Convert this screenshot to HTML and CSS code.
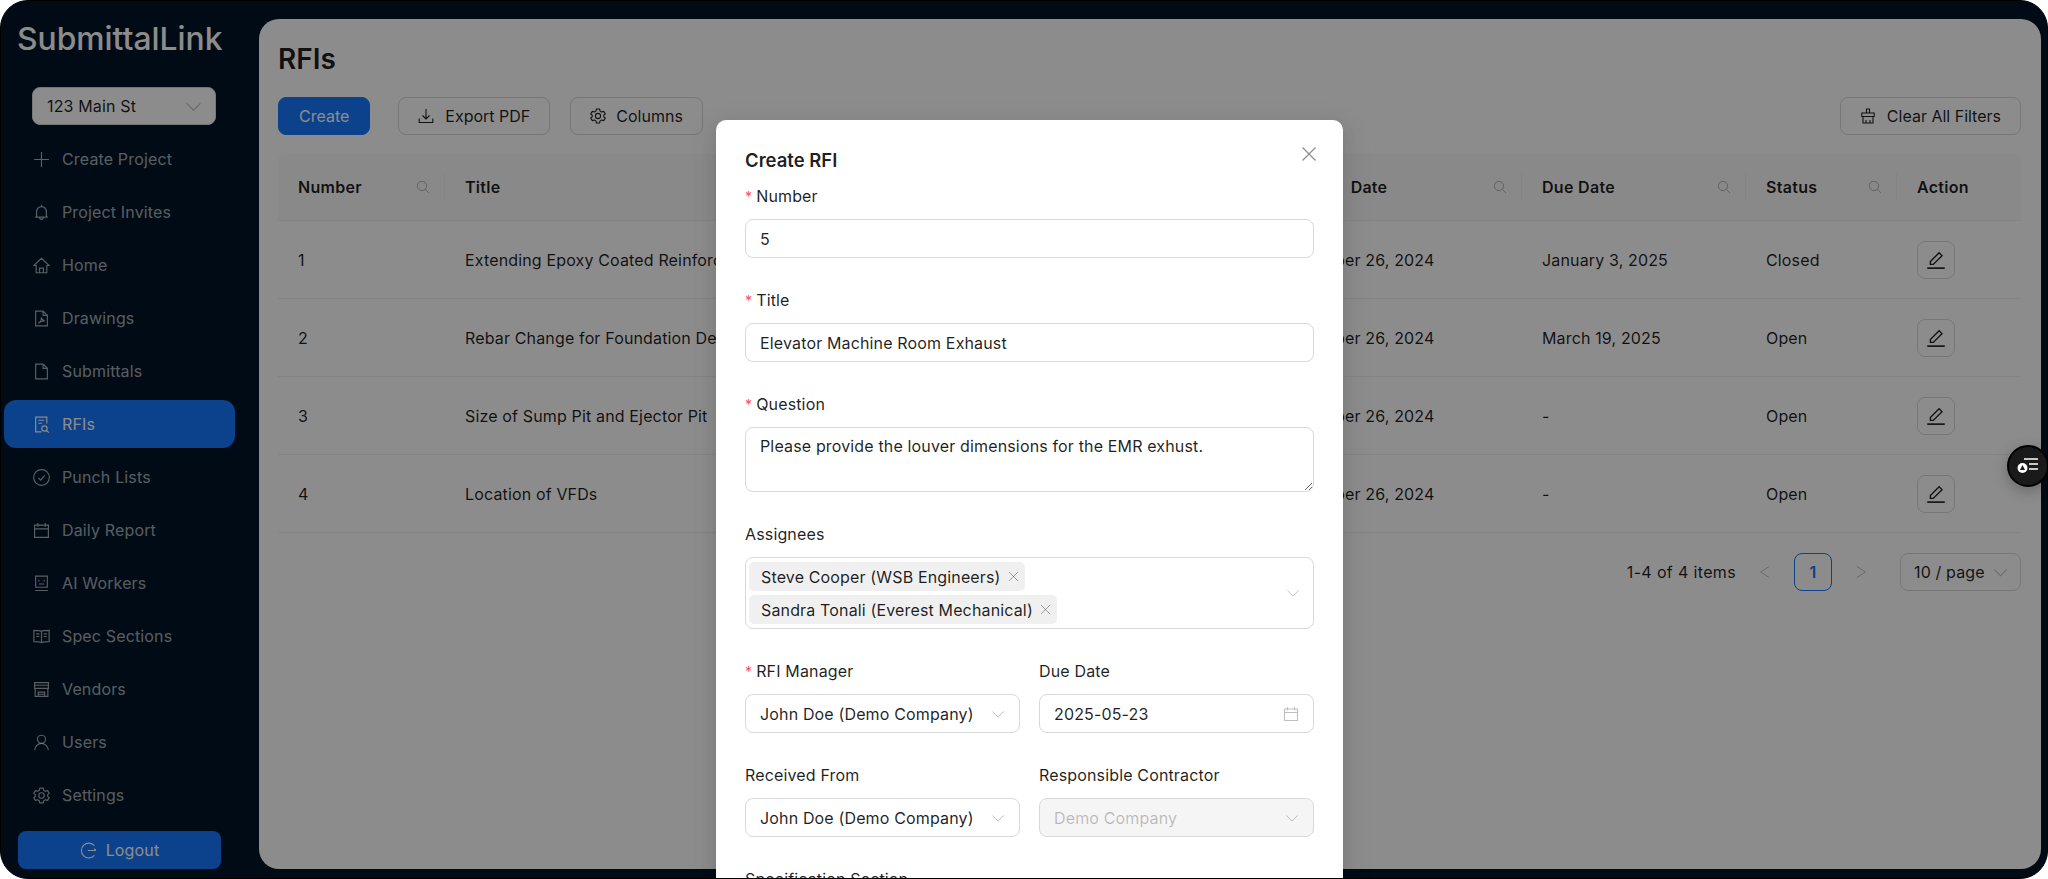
FILE: index.html
```html
<!DOCTYPE html>
<html lang="en">
<head>
  <meta charset="UTF-8" />
  <title>SubmittalLink – RFIs</title>
  <link rel="stylesheet" href="styles.css">
</head>
<body>
  <!-- icon sprite -->
  <svg class="sprite" xmlns="http://www.w3.org/2000/svg">
    <symbol id="i-plus" viewBox="0 0 16 16"><path d="M8 1v14M1 8h14"/></symbol>
    <symbol id="i-bell" viewBox="0 0 16 16"><path d="M8 .8v1.5M3.4 12.3V7a4.6 4.6 0 0 1 9.2 0v5.3M2 12.3h12M6.2 12.5c0 2.6 3.6 2.6 3.6 0"/></symbol>
    <symbol id="i-home" viewBox="0 0 16 16"><path d="M.8 8 8 1.2 15.2 8H13v6.8H3V8zM6.2 14.8v-4.4h3.6v4.4"/></symbol>
    <symbol id="i-pdf" viewBox="0 0 16 16"><path d="M2.5 1h7L13.5 5v10h-11zM9.5 1v4h4M5 12.5c1.6-1 3.2-3.6 2.8-5.6.4 1.8 1.7 3.2 3.2 3.4-1.8 0-4.4.8-6 2.2z"/></symbol>
    <symbol id="i-file" viewBox="0 0 16 16"><path d="M2.5 1h7L13.5 5v10h-11zM9.5 1v4h4"/></symbol>
    <symbol id="i-file-search" viewBox="0 0 16 16"><path d="M13 7V1H2.5v14H8M5 4h5.5M5 6.8h3.5M12.6 13.6l2.4 2"/><circle cx="10.8" cy="11.8" r="2.5"/></symbol>
    <symbol id="i-check" viewBox="0 0 16 16"><circle cx="8" cy="8" r="7.4"/><path d="M5 8.3l2.2 2.2L11 6"/></symbol>
    <symbol id="i-calendar" viewBox="0 0 16 16"><path d="M1.5 3h13v11.5h-13zM1.5 6.5h13M4.5 1v3.5M11.5 1v3.5"/></symbol>
    <symbol id="i-ai" viewBox="0 0 16 16"><path d="M2.5 1h11v10.5h-11zM5.5 4.5V6M10.5 4.5V6M5.5 8.5h5M2 14.6h12"/></symbol>
    <symbol id="i-book" viewBox="0 0 16 16"><path d="M8 3v10.8M8 3C6.5 2.2 3 2.2.8 2.2v10.6c2.2 0 5.7 0 7.2 1 1.5-1 5-1 7.200-1V2.2C13 2.2 9.500 2.2 8 3zM3 5.500h3M3 8h3M10 5.500h3M10 8h3"/></symbol>
    <symbol id="i-shop" viewBox="0 0 16 16"><path d="M1.5 1.5h13V7h-13zM1.500 4h13M2 7v7.500h12V7M5 14.500V10.500h6v4M5 12.500h6"/></symbol>
    <symbol id="i-user" viewBox="0 0 16 16"><circle cx="8" cy="5" r="3.8"/><path d="M1.5 15.2c.4-3.6 3.2-6.400 6.500-6.400s6.100 2.800 6.500 6.400"/></symbol>
    <symbol id="i-gear" viewBox="0 0 16 16"><path stroke-linejoin="round" d="M6.4 1h3.2l.5 2.1 1.5.9 2.1-.6 1.6 2.6-1.5 1.15v1.7L15.3 10l-1.6 2.6-2.1-.6-1.5.9-.5 2.1H6.4l-.5-2.1-1.5-.9-2.1.6L.7 10l1.5-1.15v-1.7L.7 6l1.6-2.6 2.1.6 1.5-.9z"/><circle cx="8" cy="8" r="2.6"/></symbol>
    <symbol id="i-logout" viewBox="0 0 16 16"><path d="M13.6 3.4a7 7 0 1 0 0 9.2M7.400 8H15M13.300 6.300 15 8"/></symbol>
    <symbol id="i-download" viewBox="0 0 16 16"><path d="M8 1v9.500M4.500 7.500 8 11l3.500-3.500M1.200 10.500v4h13.600v-4"/></symbol>
    <symbol id="i-clear" viewBox="0 0 16 16"><path d="M6.5 1h3v4h-3zM1.800 5h12.400v3.500H1.800zM3 8.500V15h10V8.500M6 15v-3M10 15v-3"/></symbol>
    <symbol id="i-search" viewBox="0 0 16 16"><circle cx="6.8" cy="6.8" r="5.3"/><path d="M10.800 10.800 15 15"/></symbol>
    <symbol id="i-edit" viewBox="0 0 16 16"><path d="M3.5 11.500V9.200l7-7 2.300 2.300-7 7z"/><path stroke-width="1.3" d="M1 14.500h14"/></symbol>
    <symbol id="i-down" viewBox="0 0 16 16"><path d="M1.500 5 8 11.500 14.500 5"/></symbol>
    <symbol id="i-prev" viewBox="0 0 16 16"><path d="M13 1.500 3 8l10 6.500"/></symbol>
    <symbol id="i-next" viewBox="0 0 16 16"><path d="M3 1.500 13 8 3 14.500"/></symbol>
    <symbol id="i-close" viewBox="0 0 16 16"><path d="M1.500 1.500l13 13M14.500 1.500l-13 13"/></symbol>
  </svg>

  <div class="window">
    <aside class="sidebar">
      <div class="logo">SubmittalLink</div>
      <div class="project-select">
        <span>123 Main St</span>
        <svg class="icon"><use href="#i-down"/></svg>
      </div>
      <nav class="menu">
        <a class="menu-item"><svg class="icon"><use href="#i-plus"/></svg>Create Project</a>
        <a class="menu-item"><svg class="icon"><use href="#i-bell"/></svg>Project Invites</a>
        <a class="menu-item"><svg class="icon"><use href="#i-home"/></svg>Home</a>
        <a class="menu-item"><svg class="icon"><use href="#i-pdf"/></svg>Drawings</a>
        <a class="menu-item"><svg class="icon"><use href="#i-file"/></svg>Submittals</a>
        <a class="menu-item active"><svg class="icon"><use href="#i-file-search"/></svg>RFIs</a>
        <a class="menu-item"><svg class="icon"><use href="#i-check"/></svg>Punch Lists</a>
        <a class="menu-item"><svg class="icon"><use href="#i-calendar"/></svg>Daily Report</a>
        <a class="menu-item"><svg class="icon"><use href="#i-ai"/></svg>AI Workers</a>
        <a class="menu-item"><svg class="icon"><use href="#i-book"/></svg>Spec Sections</a>
        <a class="menu-item"><svg class="icon"><use href="#i-shop"/></svg>Vendors</a>
        <a class="menu-item"><svg class="icon"><use href="#i-user"/></svg>Users</a>
        <a class="menu-item"><svg class="icon"><use href="#i-gear"/></svg>Settings</a>
      </nav>
      <button class="logout"><svg class="icon"><use href="#i-logout"/></svg>Logout</button>
    </aside>

    <main class="content">
      <h1 class="page-title">RFIs</h1>
      <div class="toolbar">
        <button class="btn btn-primary">Create</button>
        <button class="btn export-btn"><svg class="icon"><use href="#i-download"/></svg>Export PDF</button>
        <button class="btn columns-btn"><svg class="icon"><use href="#i-gear"/></svg>Columns</button>
        <button class="btn clear-btn"><svg class="icon"><use href="#i-clear"/></svg>Clear All Filters</button>
      </div>

      <table class="rfi-table">
        <colgroup>
          <col class="col-number"><col class="col-title"><col class="col-created">
          <col class="col-due"><col class="col-status"><col class="col-action">
        </colgroup>
        <thead>
          <tr>
            <th><div class="th-inner">Number<svg class="icon-sm"><use href="#i-search"/></svg></div></th>
            <th><div class="th-inner">Title<svg class="icon-sm"><use href="#i-search"/></svg></div></th>
            <th class="th-created"><div class="th-inner">Created Date<svg class="icon-sm"><use href="#i-search"/></svg></div></th>
            <th><div class="th-inner">Due Date<svg class="icon-sm"><use href="#i-search"/></svg></div></th>
            <th><div class="th-inner">Status<svg class="icon-sm"><use href="#i-search"/></svg></div></th>
            <th>Action</th>
          </tr>
        </thead>
        <tbody>
          <tr>
            <td>1</td><td>Extending Epoxy Coated Reinforcing Bars</td><td>December 26, 2024</td>
            <td>January 3, 2025</td><td>Closed</td>
            <td><button class="edit-btn"><svg class="icon"><use href="#i-edit"/></svg></button></td>
          </tr>
          <tr>
            <td>2</td><td>Rebar Change for Foundation Design</td><td>December 26, 2024</td>
            <td>March 19, 2025</td><td>Open</td>
            <td><button class="edit-btn"><svg class="icon"><use href="#i-edit"/></svg></button></td>
          </tr>
          <tr>
            <td>3</td><td>Size of Sump Pit and Ejector Pit</td><td>December 26, 2024</td>
            <td>-</td><td>Open</td>
            <td><button class="edit-btn"><svg class="icon"><use href="#i-edit"/></svg></button></td>
          </tr>
          <tr>
            <td>4</td><td>Location of VFDs</td><td>December 26, 2024</td>
            <td>-</td><td>Open</td>
            <td><button class="edit-btn"><svg class="icon"><use href="#i-edit"/></svg></button></td>
          </tr>
        </tbody>
      </table>

      <div class="pagination">
        <span class="page-total">1-4 of 4 items</span>
        <span class="page-arrow"><svg class="icon-sm"><use href="#i-prev"/></svg></span>
        <span class="page-current">1</span>
        <span class="page-arrow"><svg class="icon-sm"><use href="#i-next"/></svg></span>
        <div class="page-size">10 / page<svg class="icon-sm"><use href="#i-down"/></svg></div>
      </div>
    </main>

    <!-- modal layer -->
    <div class="mask">
      <form class="modal">
        <div class="modal-head">
          <h2>Create RFI</h2>
          <svg class="modal-close"><use href="#i-close"/></svg>
        </div>

        <div class="field">
          <label class="req">Number</label>
          <input class="control" type="text" value="5" readonly />
        </div>
        <div class="field">
          <label class="req">Title</label>
          <input class="control" type="text" value="Elevator Machine Room Exhaust" readonly />
        </div>
        <div class="field">
          <label class="req">Question</label>
          <textarea class="control area" readonly>Please provide the louver dimensions for the EMR exhust.</textarea>
        </div>
        <div class="field">
          <label>Assignees</label>
          <div class="control multi">
            <div class="tags">
              <span class="tag">Steve Cooper (WSB Engineers)<svg><use href="#i-close"/></svg></span>
              <span class="tag">Sandra Tonali (Everest Mechanical)<svg><use href="#i-close"/></svg></span>
            </div>
            <svg class="icon-sm chev"><use href="#i-down"/></svg>
          </div>
        </div>
        <div class="field-row">
          <div class="field">
            <label class="req">RFI Manager</label>
            <div class="control select">John Doe (Demo Company)<svg class="icon-sm chev"><use href="#i-down"/></svg></div>
          </div>
          <div class="field">
            <label>Due Date</label>
            <div class="control select">2025-05-23<svg class="icon-sm chev date-icon"><use href="#i-calendar"/></svg></div>
          </div>
        </div>
        <div class="field-row">
          <div class="field">
            <label>Received From</label>
            <div class="control select">John Doe (Demo Company)<svg class="icon-sm chev"><use href="#i-down"/></svg></div>
          </div>
          <div class="field">
            <label>Responsible Contractor</label>
            <div class="control select disabled">Demo Company<svg class="icon-sm chev"><use href="#i-down"/></svg></div>
          </div>
        </div>
        <div class="field">
          <label>Specification Section</label>
          <div class="control select"></div>
        </div>
      </form>
    </div>

    <div class="float-btn">
      <svg viewBox="0 0 24 24" width="24" height="24">
        <path d="M8 5h14M13 10h9M13 15h9" stroke="#fff" stroke-width="1.5" fill="none"/>
        <circle cx="6.5" cy="14" r="5" fill="#fff"/>
        <path d="M6.5 11 9 16H4z" fill="#1a1a1a"/>
      </svg>
    </div>
  </div>
</body>
</html>
```

FILE: styles.css
```css
/* Reset and base */
* { margin:0; padding:0; box-sizing:border-box; }
html, body { height:100%; }
body {
  background:#fff; color:rgba(0,0,0,0.88);
  font-family:Inter, "Noto Sans", sans-serif; font-size:16px; letter-spacing:0.15px;
  overflow:hidden;
}
.sprite { display:none; }
.icon, .icon-sm, .modal-close, .tag svg {
  fill:none; stroke:currentColor; stroke-width:1.1; flex:none;
}
.icon { width:16px; height:16px; }
.icon-sm { width:14px; height:14px; }
button { font:inherit; letter-spacing:inherit; color:inherit; background:none; border:none; }

.window {
  position:relative; display:flex; height:100vh;
  background:#001529; border:1px solid #000; border-radius:28px; overflow:hidden;
}

/* Sidebar */
.sidebar { width:258px; flex:none; display:flex; flex-direction:column; }
.logo {
  height:40px; margin:18px 0 0 16px;
  color:#fff; font-size:31.8px; font-weight:500; line-height:40px; letter-spacing:0;
}
.project-select {
  display:flex; align-items:center; justify-content:space-between;
  width:184px; height:38px; margin:28px 0 0 31px; padding:0 13px 0 14px;
  background:#fff; border:1px solid #d9d9d9; border-radius:8px;
}
.project-select .icon { width:17px; height:17px; color:rgba(0,0,0,0.25); }
.menu { display:flex; flex-direction:column; gap:5px; margin:10px 0 0 3px; }
.menu-item {
  display:flex; align-items:center; gap:12px;
  width:231px; height:48px; padding-left:29px;
  color:rgba(255,255,255,0.65); border-radius:12px;
}
.menu-item .icon { width:17px; height:17px; }
.menu-item.active { background:#1677ff; color:#fff; }
.logout {
  display:flex; align-items:center; justify-content:center; gap:9px;
  width:203px; height:38px; margin:12px 0 0 17px;
  background:#1677ff; color:#fff; border-radius:8px;
}
.logout .icon { width:17px; height:17px; }

/* Main panel */
.content {
  flex:1; margin:18px 6px 9px 0; padding:20px 20px 0 19px;
  background:#fff; border-radius:20px;
}
.page-title { font-size:28px; font-weight:600; line-height:40px; letter-spacing:0; margin-bottom:18px; }
.toolbar { display:flex; gap:20px; margin-bottom:19px; }
.btn {
  display:flex; align-items:center; gap:11px;
  height:38px; padding:0 19px; letter-spacing:0;
  background:#fff; border:1px solid #d9d9d9; border-radius:8px;
}
.btn-primary { padding:0 20px; background:#1677ff; border-color:#1677ff; color:#fff; margin-right:8px; }
.columns-btn { gap:10px; }
.clear-btn { margin-left:auto; }

/* Table */
.rfi-table { width:1743px; table-layout:fixed; border-collapse:separate; border-spacing:0; }
.col-number { width:167px; }
.col-title { width:816px; }
.col-created { width:261px; }
.col-due { width:224px; }
.col-status { width:151px; }
.col-action { width:124px; }
.rfi-table th {
  position:relative; height:67px; padding:0 20px;
  background:#fafafa; border-bottom:1px solid #f0f0f0;
  text-align:left; font-weight:600; letter-spacing:0.3px;
}
.rfi-table th.th-created { letter-spacing:0.15px; word-spacing:3px; }
.rfi-table th:first-child { border-top-left-radius:8px; }
.rfi-table th:last-child { border-top-right-radius:8px; }
.rfi-table th:not(:last-child)::after {
  content:""; position:absolute; right:0; top:19px; height:27px; width:1px; background:#f0f0f0;
}
.th-inner { display:flex; align-items:center; justify-content:space-between; margin-right:-5px; }
.th-inner .icon-sm { color:rgba(0,0,0,0.29); }
.rfi-table td { height:78px; padding:0 20px; border-bottom:1px solid #f0f0f0; white-space:nowrap; }
.edit-btn {
  display:flex; align-items:center; justify-content:center;
  width:38px; height:38px; background:#fff; border:1px solid #d9d9d9; border-radius:8px;
}
.edit-btn .icon { width:20px; height:20px; }

/* Pagination */
.pagination { display:flex; align-items:center; justify-content:flex-end; gap:10px; margin-top:20px; }
.page-total { letter-spacing:0.35px; }
.page-arrow { display:flex; align-items:center; justify-content:center; width:38px; height:38px; color:rgba(0,0,0,0.25); }
.page-current {
  display:flex; align-items:center; justify-content:center;
  width:38px; height:38px; border:1px solid #1677ff; border-radius:8px;
  color:#1677ff; font-weight:600;
}
.page-size {
  display:flex; align-items:center; justify-content:space-between;
  width:121px; height:38px; margin-left:10px; padding:0 12px 0 13px;
  border:1px solid #d9d9d9; border-radius:8px;
}
.page-size .icon-sm { width:15px; height:15px; color:rgba(0,0,0,0.25); }

/* Modal */
.mask {
  position:absolute; inset:0; display:flex; justify-content:center; align-items:flex-start;
  padding:119px 0 0 11px; background:rgba(0,0,0,0.45);
}
.modal {
  flex:none; width:627px; padding:28px 29px 30px;
  background:#fff; border-radius:10px;
  box-shadow:0 6px 16px rgba(0,0,0,0.08), 0 3px 6px -4px rgba(0,0,0,0.12), 0 9px 28px 8px rgba(0,0,0,0.05);
}
.modal-head { position:relative; height:24px; margin-bottom:10px; }
.modal-head h2 { font-size:18.5px; font-weight:600; line-height:24px; letter-spacing:0; }
.modal-close {
  position:absolute; right:-3px; top:-2px; width:16px; height:16px;
  color:rgba(0,0,0,0.45); stroke-width:1.2;
}
.field { margin-bottom:28px; }
.field label { display:block; height:30px; margin-bottom:7px; line-height:29px; }
.field label.req::before { content:"*"; margin-right:4px; color:#ff4d4f; font-size:14px; }
.field-row { display:grid; grid-template-columns:1fr 1fr; column-gap:19px; }
.control {
  display:block; width:100%; height:39px; padding:0 14px;
  background:#fff; border:1px solid #d9d9d9; border-radius:8px;
  font:inherit; letter-spacing:inherit; color:rgba(0,0,0,0.88); outline:none;
}
.area { height:65px; padding:6px 14px; line-height:24px; resize:vertical; overflow:hidden; }
.select { display:flex; align-items:center; justify-content:space-between; white-space:nowrap; }
.chev { color:rgba(0,0,0,0.25); }
.date-icon { width:16px; height:16px; }
.select.disabled { background:#f5f5f5; color:rgba(0,0,0,0.25); }
.multi {
  display:flex; align-items:center; justify-content:space-between;
  height:72px; padding:0 13px 0 3px;
}
.tags { display:flex; flex-direction:column; align-items:flex-start; gap:4px; }
.tag {
  display:flex; align-items:center; gap:7px;
  height:29px; padding:0 6px 0 12px; background:#f0f0f0; border-radius:5px;
}
.tag svg { width:11px; height:11px; color:rgba(0,0,0,0.45); }

/* Floating widget */
.float-btn {
  position:absolute; right:-2px; top:444px; display:flex; align-items:center; justify-content:center;
  width:42px; height:42px; background:#1a1a1a; border:2px solid #000; border-radius:50%;
  box-shadow:0 4px 14px rgba(0,0,0,0.25);
}
```
